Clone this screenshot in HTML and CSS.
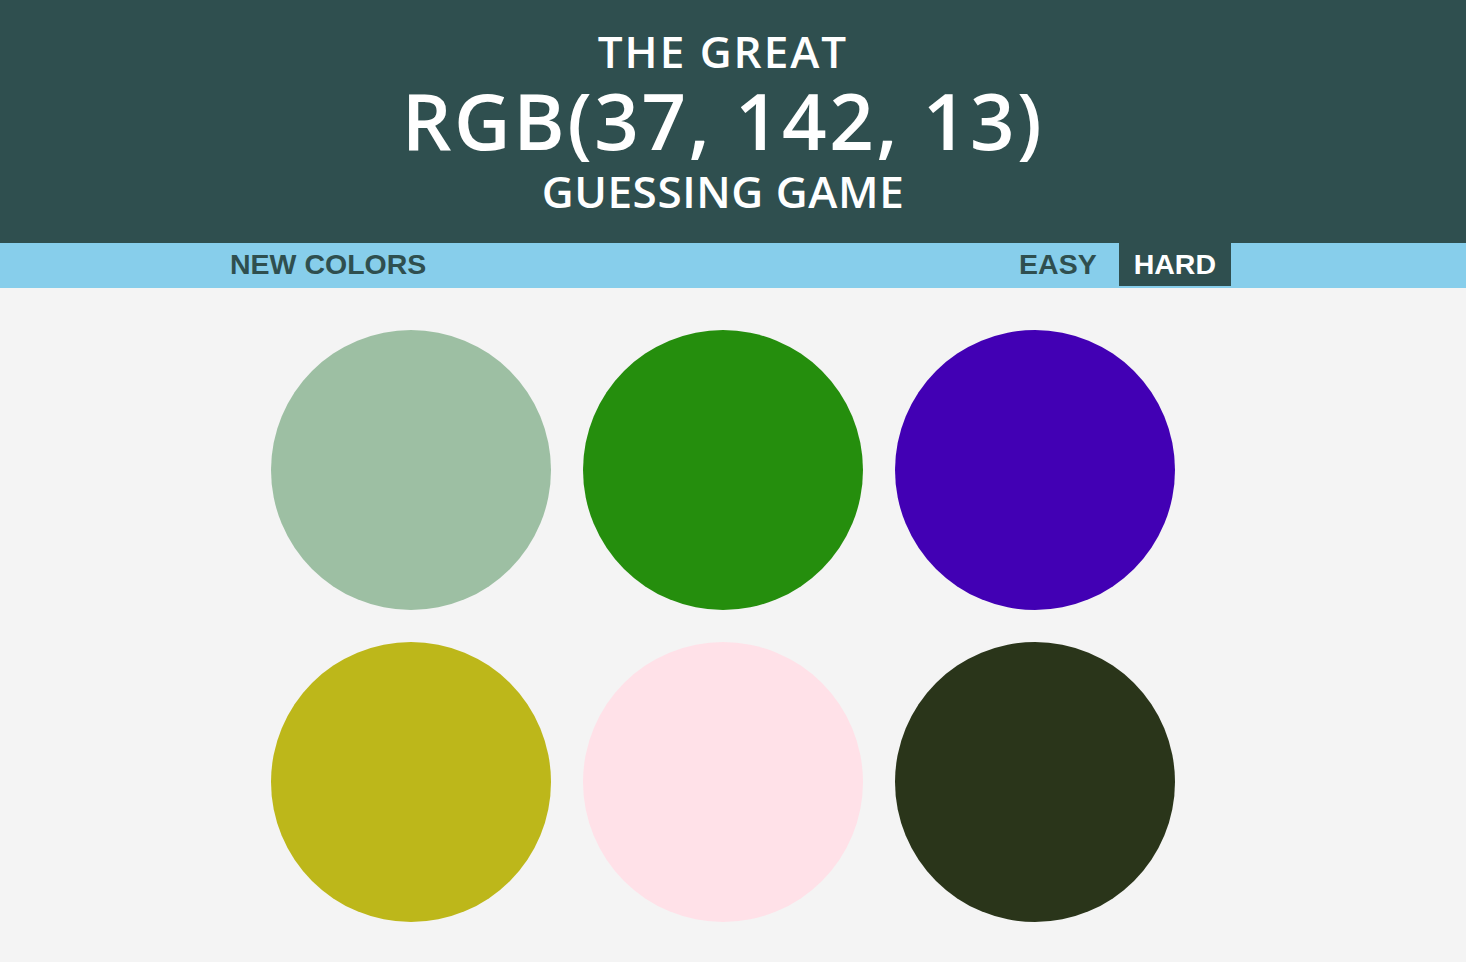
FILE: index.html
```html
<!DOCTYPE html>
<html>
<head>
<meta charset="utf-8">
<title>Color Game</title>
<link rel="stylesheet" href="styles.css">
</head>
<body>
<header class="header">
  <div class="title-small great">THE GREAT</div>
  <div class="title-rgb">RGB(37, 142, 13)</div>
  <div class="title-small guess">GUESSING GAME</div>
</header>
<nav class="stripe">
  <div class="stripe-inner">
    <button class="btn">NEW COLORS</button>
    <span class="spacer"></span>
    <button class="btn easy">EASY</button>
    <button class="btn selected">HARD</button>
  </div>
</nav>
<main class="board">
  <div class="circle" style="background:#9dbfa3"></div>
  <div class="circle" style="background:#258e0d"></div>
  <div class="circle" style="background:#4200b4"></div>
  <div class="circle" style="background:#bdb71a"></div>
  <div class="circle" style="background:#ffe1e8"></div>
  <div class="circle" style="background:#2a351a"></div>
</main>
</body>
</html>
```
FILE: styles.css
```css
html, body {
  margin: 0;
  padding: 0;
}
body {
  background: #f4f4f4;
  font-family: "Liberation Sans", Arial, sans-serif;
}
.header {
  background: #2f4f4f;
  color: #fff;
  text-align: center;
  height: 243px;
  box-sizing: border-box;
  padding: 25px 20px 0 0;
  font-family: "Open Sans", "Noto Sans", sans-serif;
  font-weight: 600;
}
.title-small {
  font-size: 44px;
  line-height: 52px;
}
.great {
  letter-spacing: 2px;
}
.guess {
  letter-spacing: 0.6px;
  line-height: 54px;
}
.title-rgb {
  font-size: 78px;
  line-height: 87px;
  letter-spacing: 2.5px;
}
.stripe {
  background: #87ceeb;
  height: 45px;
}
.stripe-inner {
  width: 1001px;
  margin-left: 230px;
  display: flex;
  height: 43px;
}
.spacer {
  flex: 1;
}
.btn {
  border: none;
  background: none;
  font-family: "Liberation Sans", Arial, sans-serif;
  font-weight: bold;
  font-size: 28.5px;
  color: #2f4f4f;
  padding: 0 15px;
  height: 43px;
  cursor: pointer;
}
.btn:first-child {
  padding-left: 0;
}
.btn.easy {
  padding-right: 22px;
}
.btn.selected {
  background: #2f4f4f;
  color: #fff;
}
.board {
  display: grid;
  grid-template-columns: repeat(3, 280px);
  gap: 32px;
  justify-content: center;
  padding: 42px 20px 0 0;
}
.circle {
  width: 280px;
  height: 280px;
  border-radius: 50%;
}
```
